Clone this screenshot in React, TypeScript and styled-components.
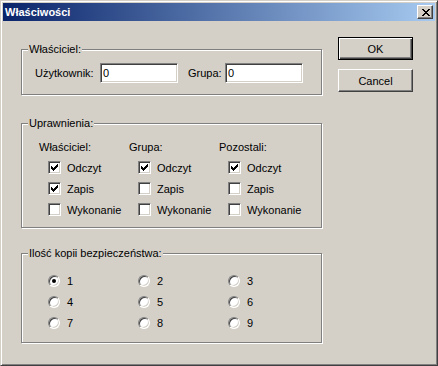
import styled, { createGlobalStyle } from "styled-components";

const GlobalStyle = createGlobalStyle`
  html, body {
    margin: 0;
    padding: 0;
    background: #d4d0c8;
  }
  body {
    font: 11px "Liberation Sans", Arial, sans-serif;
    color: #000;
  }
`;

const CHECK_PATH =
  "M6 0h1v1h-1z M5 1h2v1h-2z M0 2h1v1h-1z M4 2h3v1h-3z M0 3h2v1h-2z M3 3h3v1h-3z M0 4h5v1h-5z M1 5h3v1h-3z M2 6h1v1h-1z";

const CLOSE_PATH =
  "M0 0h2v1h-2z M6 0h2v1h-2z M1 1h2v1h-2z M5 1h2v1h-2z M2 2h4v1h-4z M3 3h2v1h-2z M2 4h4v1h-4z M1 5h2v1h-2z M5 5h2v1h-2z M0 6h2v1h-2z M6 6h2v1h-2z";

const columns = [
  { title: "Właściciel:", perms: [true, true, false] },
  { title: "Grupa:", perms: [true, false, false] },
  { title: "Pozostali:", perms: [true, false, false] }
];

const permNames = ["Odczyt", "Zapis", "Wykonanie"];

const App = () => {
  return (
    <>
      <GlobalStyle />
      <Window>
        <TitleBar>
          <Title>Właściwości</Title>
          <CloseButton aria-label="Zamknij">
            <svg width="8" height="7" viewBox="0 0 8 7" shapeRendering="crispEdges">
              <path d={CLOSE_PATH} fill="#000" />
            </svg>
          </CloseButton>
        </TitleBar>
        <Body>
          <LeftColumn>
            <GroupBox $top={28} $pad="13px 0 11px 13px">
              <Caption>Właściciel:</Caption>
              <FieldRow>
                <FieldLabel $w={65}>Użytkownik:</FieldLabel>
                <TextField defaultValue="0" />
                <FieldLabel $w={37} $ml={10}>
                  Grupa:
                </FieldLabel>
                <TextField defaultValue="0" />
              </FieldRow>
            </GroupBox>

            <GroupBox $top={28} $pad="12px 0 7px 17px">
              <Caption>Uprawnienia:</Caption>
              <Grid>
                {columns.map((col) => (
                  <Column key={col.title}>
                    <Line>{col.title}</Line>
                    {permNames.map((name, i) => (
                      <Line key={name} $indent={9}>
                        <CheckBox>
                          {col.perms[i] && (
                            <svg width="7" height="7" viewBox="0 0 7 7" shapeRendering="crispEdges">
                              <path d={CHECK_PATH} fill="#000" />
                            </svg>
                          )}
                        </CheckBox>
                        <OptionText>{name}</OptionText>
                      </Line>
                    ))}
                  </Column>
                ))}
              </Grid>
            </GroupBox>

            <GroupBox $top={25} $pad="16px 0 9px 26px">
              <Caption>Ilość kopii bezpieczeństwa:</Caption>
              <Grid>
                {[1, 2, 3, 4, 5, 6, 7, 8, 9].map((n) => (
                  <Line key={n}>
                    <Radio $checked={n === 1} />
                    <OptionText>{n}</OptionText>
                  </Line>
                ))}
              </Grid>
            </GroupBox>
          </LeftColumn>

          <RightColumn>
            <PushButton $default>OK</PushButton>
            <PushButton>Cancel</PushButton>
          </RightColumn>
        </Body>
      </Window>
    </>
  );
};

const Window = styled.div`
  width: 438px;
  height: 366px;
  box-sizing: border-box;
  background: #d4d0c8;
  border: 1px solid;
  border-color: #d4d0c8 #404040 #404040 #d4d0c8;
  box-shadow: inset 1px 1px 0 #fff, inset -1px -1px 0 #808080;
  padding: 2px;
  display: flex;
  flex-direction: column;
`;

const TitleBar = styled.div`
  height: 18px;
  display: flex;
  align-items: center;
  justify-content: space-between;
  padding: 0 2px 0 2px;
  background: linear-gradient(to right, #0a246a, #a6caf0);
`;

const Title = styled.div`
  color: #fff;
  font-weight: bold;
  font-size: 11px;
  line-height: 13px;
`;

const CloseButton = styled.button`
  width: 16px;
  height: 14px;
  padding: 0;
  box-sizing: border-box;
  background: #d4d0c8;
  border: 1px solid;
  border-color: #fff #404040 #404040 #fff;
  box-shadow: inset -1px -1px 0 #808080, inset 1px 1px 0 #d4d0c8;
  display: flex;
  align-items: center;
  justify-content: center;

  svg {
    display: block;
    margin-left: 1px;
  }
`;

const Body = styled.div`
  flex: 1;
  display: flex;
  padding-left: 18px;
`;

const LeftColumn = styled.div`
  width: 301px;
  display: flex;
  flex-direction: column;
`;

const RightColumn = styled.div`
  display: flex;
  flex-direction: column;
  gap: 9px;
  margin: 16px 0 0 16px;
`;

const GroupBox = styled.section<{ $top: number; $pad: string }>`
  position: relative;
  margin-top: ${({ $top }) => $top}px;
  padding: ${({ $pad }) => $pad};
  border: 1px solid #808080;
  box-shadow: 1px 1px 0 #fff, inset 1px 1px 0 #fff;
`;

const Caption = styled.span`
  position: absolute;
  top: -7px;
  left: 6px;
  padding: 0 1px;
  line-height: 13px;
  background: #d4d0c8;
`;

const FieldRow = styled.div`
  display: flex;
  align-items: center;
`;

const FieldLabel = styled.label<{ $w: number; $ml?: number }>`
  width: ${({ $w }) => $w}px;
  margin-left: ${({ $ml }) => $ml ?? 0}px;
  flex-shrink: 0;
`;

const TextField = styled.input`
  width: 78px;
  height: 20px;
  box-sizing: border-box;
  margin: 0;
  padding: 0 2px;
  border: 1px solid;
  border-color: #808080 #fff #fff #808080;
  box-shadow: inset 1px 1px 0 #404040, inset -1px -1px 0 #d4d0c8;
  background: #fff;
  font: inherit;
  color: #000;
  outline: none;
`;

const Grid = styled.div`
  display: grid;
  grid-template-columns: repeat(3, 90px);
`;

const Column = styled.div`
  display: flex;
  flex-direction: column;
`;

const Line = styled.div<{ $indent?: number }>`
  height: 21px;
  display: flex;
  align-items: center;
  padding-left: ${({ $indent }) => $indent ?? 0}px;
`;

const CheckBox = styled.span`
  width: 13px;
  height: 13px;
  box-sizing: border-box;
  flex-shrink: 0;
  border: 1px solid;
  border-color: #808080 #fff #fff #808080;
  box-shadow: inset 1px 1px 0 #404040, inset -1px -1px 0 #d4d0c8;
  background: #fff;
  display: flex;
  align-items: center;
  justify-content: center;

  svg {
    display: block;
  }
`;

const Radio = styled.span<{ $checked?: boolean }>`
  position: relative;
  width: 12px;
  height: 12px;
  margin: 0 1px 0 0;
  box-sizing: border-box;
  flex-shrink: 0;
  border-radius: 50%;
  border: 1px solid;
  border-color: #808080 #fff #fff #808080;
  box-shadow: inset 1px 1px 0 #404040, inset -1px -1px 0 #d4d0c8;
  background: #fff;

  &::after {
    content: "";
    display: ${({ $checked }) => ($checked ? "block" : "none")};
    position: absolute;
    left: 3px;
    top: 3px;
    width: 4px;
    height: 4px;
    border-radius: 50%;
    background: #000;
  }
`;

const OptionText = styled.span`
  margin-left: 6px;
  white-space: nowrap;
`;

const PushButton = styled.button<{ $default?: boolean }>`
  width: 75px;
  height: 23px;
  box-sizing: border-box;
  margin: 0;
  padding: 0;
  font: inherit;
  color: #000;
  background: #d4d0c8;
  border: 1px solid;
  border-color: ${({ $default }) => ($default ? "#000" : "#fff #404040 #404040 #fff")};
  box-shadow: ${({ $default }) =>
    $default
      ? "inset 1px 1px 0 #fff, inset -1px -1px 0 #404040, inset -2px -2px 0 #808080"
      : "inset -1px -1px 0 #808080, inset 1px 1px 0 #d4d0c8"};
`;

export default App;
